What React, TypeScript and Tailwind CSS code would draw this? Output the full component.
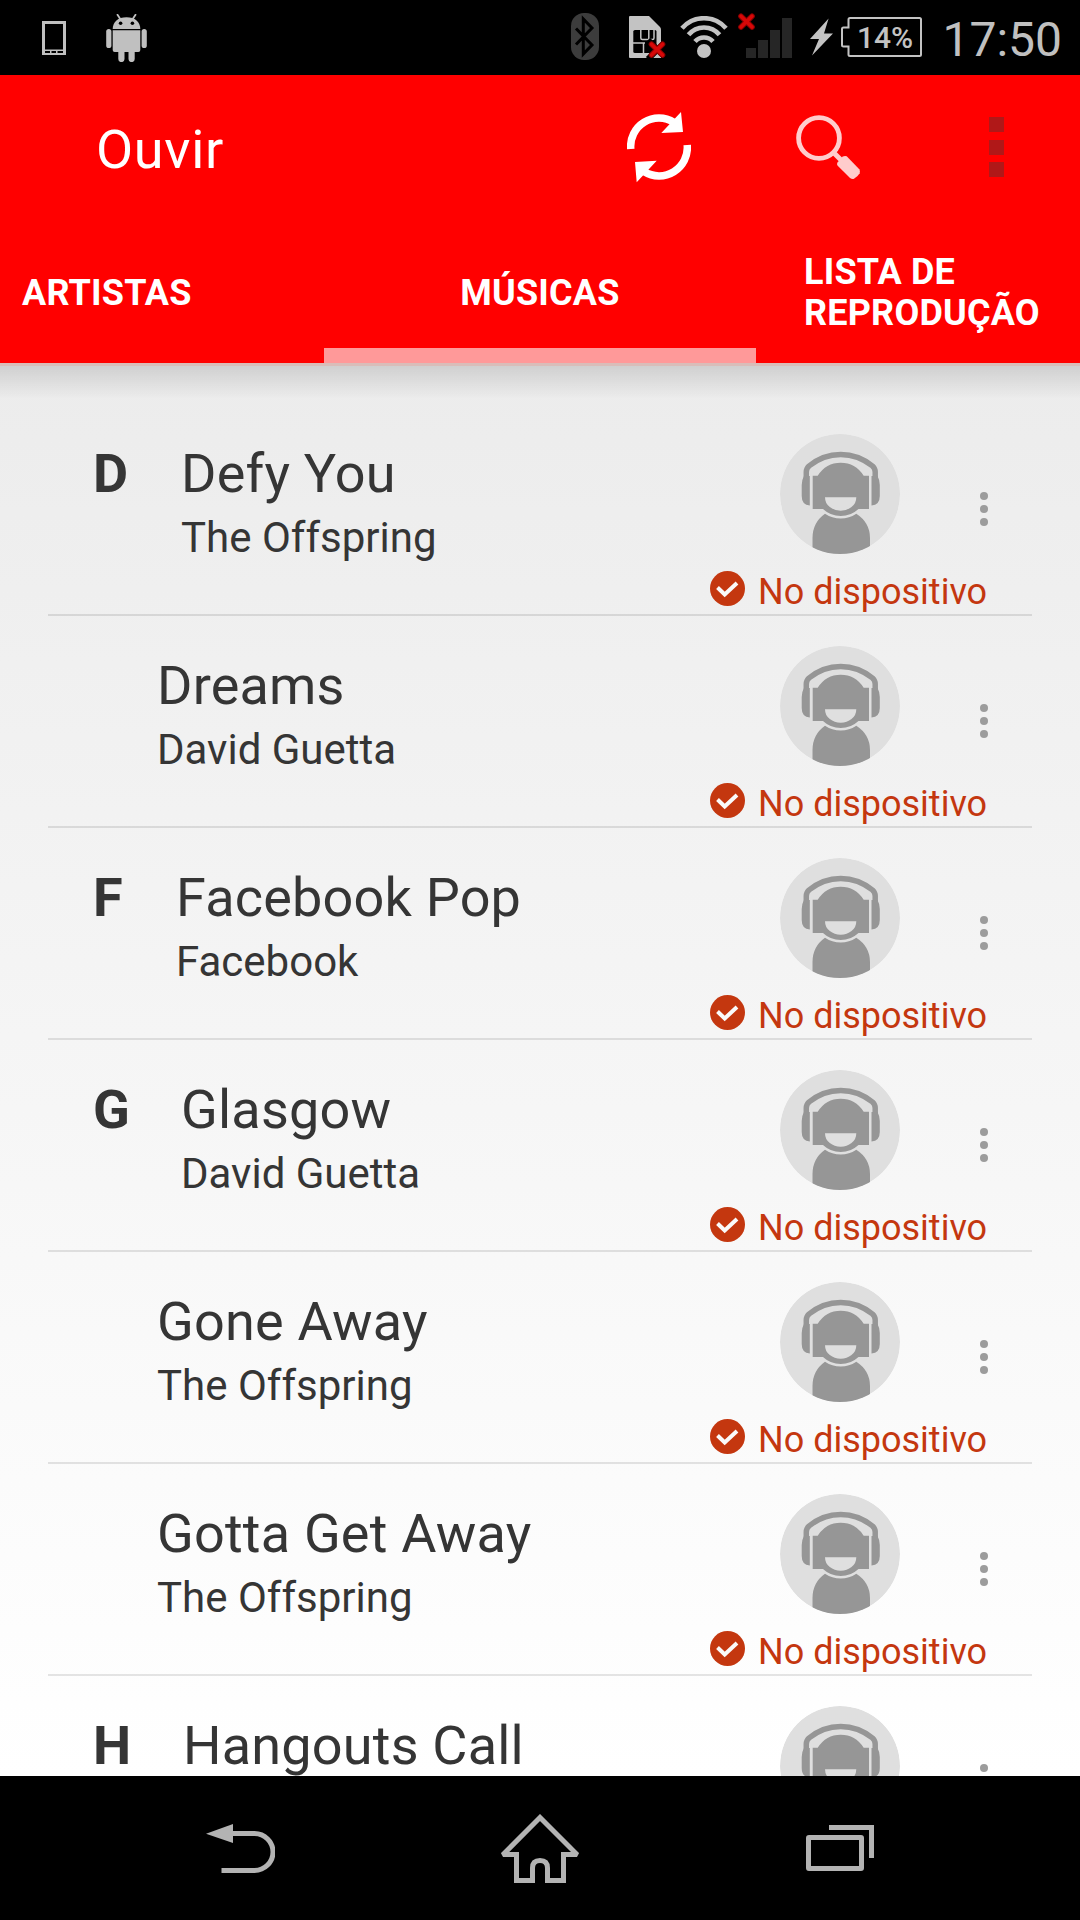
type Song = { letter?: string; title: string; artist?: string };

const SONGS: Song[] = [
  { letter: "D", title: "Defy You", artist: "The Offspring" },
  { title: "Dreams", artist: "David Guetta" },
  { letter: "F", title: "Facebook Pop", artist: "Facebook" },
  { letter: "G", title: "Glasgow", artist: "David Guetta" },
  { title: "Gone Away", artist: "The Offspring" },
  { title: "Gotta Get Away", artist: "The Offspring" },
  { letter: "H", title: "Hangouts Call" },
];

// Width of the index column, which follows the width of its letter.
const INDEX_WIDTH: Record<string, string> = {
  "": "w-[64px]",
  D: "w-[88px]",
  F: "w-[83px]",
  G: "w-[88px]",
  H: "w-[90px]",
};

function RedCross() {
  return (
    <>
      <path d="M3 3.2 14 14M14 3.2 3 14" stroke="#8f0000" strokeWidth="5.6" strokeLinecap="round" />
      <path d="M3 3.2 14 14M14 3.2 3 14" stroke="#d80808" strokeWidth="3.6" strokeLinecap="round" />
    </>
  );
}

function StatusBar() {
  return (
    <div className="flex h-[75px] items-start justify-between bg-black">
      <div className="flex items-start">
        <svg className="mt-[21px] ml-[42px]" width="24" height="34" viewBox="0 0 24 34">
          <path d="M0 0H24V34H0Z" fill="#c0c0c0" />
          <path d="M3 3H21V28.5H3ZM3 30H8V32H3ZM9.5 30H14V32H9.5ZM15.5 30H21V32H15.5Z" fill="#000" />
        </svg>
        <svg className="mt-[14px] ml-[39.5px]" width="41" height="48" viewBox="0 0 41 48" fill="#c0c0c0">
          <path d="M11.5 0.8 14.6 5.6M29.5 0.8 26.4 5.6" stroke="#c0c0c0" strokeWidth="1.8" strokeLinecap="round" />
          <path d="M6.7 15C6.7 8 12 3.3 20.5 3.3S34.3 8 34.3 15Z" />
          <circle cx="14.6" cy="9.3" r="1.8" fill="#000" />
          <circle cx="26.4" cy="9.3" r="1.8" fill="#000" />
          <path d="M6.7 16.3H34.3V36Q34.3 38 32.3 38H8.7Q6.7 38 6.7 36Z" />
          <rect x="0.2" y="15" width="5.2" height="19" rx="2.6" />
          <rect x="35.6" y="15" width="5.2" height="19" rx="2.6" />
          <path d="M12.3 37H18.5V45A3.1 3.1 0 0 1 12.3 45ZM22.5 37H28.7V45A3.1 3.1 0 0 1 22.5 45Z" />
        </svg>
      </div>
      <div className="flex items-start pr-[18px]">
        <svg className="mt-[13px]" width="28" height="47" viewBox="0 0 28 47" fill="none">
          <rect width="28" height="47" rx="13" fill="#3c3c3c" />
          <path d="M5 15.5 21 32 12.3 41V6L21 15 5 31.5" stroke="#000" strokeWidth="3" />
        </svg>
        <svg className="mt-[16px] ml-[30px]" width="37" height="43" viewBox="0 0 37 43" fill="none">
          <path d="M1 0H20L31 11Q32 12 32 14V42H1Q0 42 0 41V1Q0 0 1 0Z" fill="#c3c3c3" />
          <path d="M6 14H26Q27.500 14 27.500 15.500V37H6Q4.300 37 4.300 35.500V15.500Q4.300 14 6 14Z" fill="#000" />
          <path d="M4 27H16M14.500 37V27M11.800 14V22Q11.800 23.500 13.300 23.500H19.800V14M20 23.500H23.500Q25 23.500 25 22V14" stroke="#c3c3c3" strokeWidth="1.500" />
          <path d="M19 24 38 43M38 24 19 43" stroke="#000" strokeWidth="6" />
          <g transform="translate(19.500 25)">
            <RedCross />
          </g>
        </svg>
        <svg className="mt-[16px] ml-[14px]" width="48" height="43" viewBox="0 0 48 43" fill="none">
          <path d="M2 12.300A29 29 0 0 1 46 12.300M8.500 18.800A20 20 0 0 1 39.500 18.800M15 25.500A12 12 0 0 1 33 25.500" stroke="#c3c3c3" strokeWidth="4.600" />
          <circle cx="24" cy="35" r="7" fill="#c3c3c3" />
        </svg>
        <svg className="mt-[13px] ml-[10px]" width="54" height="45" viewBox="0 0 54 45" fill="none">
          <RedCross />
          <path d="M8 35H18V45H8ZM20 27H30V45H20ZM32 17H42V45H32ZM44 5H54V45H44Z" fill="#262626" />
        </svg>
        <svg className="mt-[18px] ml-[18px]" width="23" height="38" viewBox="0 0 23 38">
          <path d="M18.600 0.500 0 21H9L2 37.500 23 15.500H14Z" fill="#c3c3c3" />
        </svg>
        <div className="relative mt-[17px] ml-[8px] flex h-[40px] w-[81px]">
          <svg className="absolute inset-0" width="81" height="40" viewBox="0 0 81 40" fill="none">
            <path d="M9 1H78.500Q80 1 80 2.500V37.500Q80 39 78.500 39H9Q7.500 39 7.500 37.500V29.500H2.500Q1 29.500 1 28V12Q1 10.500 2.500 10.500H7.500V2.500Q7.500 1 9 1Z" stroke="#c3c3c3" strokeWidth="2" />
          </svg>
          <span className="ml-[15.500px] text-[30px] leading-[42px] font-medium text-[#c3c3c3]">14%</span>
        </div>
        <span className="ml-[20px] text-[48px] leading-[79px] text-[#c0c0c0]">17:50</span>
      </div>
    </div>
  );
}

function AppBar() {
  return (
    <div className="flex h-[143px] items-start justify-between">
      <h1 className="mt-[43px] ml-[96px] text-[54px] leading-[64px] tracking-[0.700px] text-white">Ouvir</h1>
      <div className="flex items-start pr-[76.500px]">
        <svg className="mt-[37px]" width="64" height="71" viewBox="0 0 64 71" fill="none">
          <path d="M3.800 37A28.200 28.200 0 0 1 47 10.500M60.200 33A28.200 28.200 0 0 1 17 59.500" stroke="#fff" strokeWidth="7.500" />
          <path d="M54 0 56 20 34.300 21ZM9.700 70.300 8 50 29.700 48.700Z" fill="#fff" />
        </svg>
        <svg className="mt-[39px] ml-[104px]" width="66" height="66" viewBox="0 0 66 66" fill="none">
          <circle cx="24" cy="24" r="20.400" stroke="#ffcccc" strokeWidth="4.800" />
          <path d="M38.500 38.500 46 46" stroke="#ffcccc" strokeWidth="5" />
          <path d="M42.300 48.700 47.700 42.500Q50 41.500 51.700 42.300L64.300 55.300Q65.500 57.300 64.700 59.300 62.500 63 59 64.700 57 65.300 55 64L42.700 51.700Q41.500 50 42.300 48.700Z" fill="#ffcccc" />
        </svg>
        <div className="mt-[42px] ml-[127.500px] flex flex-col gap-[7.500px]">
          <i className="size-[15px] bg-[#b01818]" />
          <i className="size-[15px] bg-[#b01818]" />
          <i className="size-[15px] bg-[#b01818]" />
        </div>
      </div>
    </div>
  );
}

function Tabs() {
  return (
    <div className="flex h-[145px] text-[36px] leading-[41px] font-bold tracking-[0.200px] text-white">
      <div className="flex w-[324px] items-center pt-[5px] pl-[22px]">ARTISTAS</div>
      <div className="relative flex w-[432px] items-center justify-center pt-[5px]">
        MÚSICAS
        <div className="absolute inset-x-0 bottom-0 h-[15px] bg-[#ff9999]" />
      </div>
      <div className="flex w-[324px] items-center pt-[5px] pl-[48px]">
        LISTA DE
        <br />
        REPRODUÇÃO
      </div>
    </div>
  );
}

function Avatar() {
  return (
    <svg className="size-[120px] rounded-full" viewBox="0 0 120 120" fill="none">
      <circle cx="60" cy="60" r="60" fill="#dfdfdf" />
      <path d="M26.300 48V38Q26.300 34.500 29 32 43 20.400 60.700 20.400T92.500 32Q95.200 34.500 95.200 38V48" stroke="#969696" strokeWidth="5.500" />
      <path d="M24 42Q21.700 46 21.700 51V62Q21.700 71 29.800 71.500V42ZM97.500 42Q99.800 46 99.800 51V62Q99.800 71 91.500 71.500V42Z" fill="#969696" />
      <path d="M32.700 41.700H37.700Q46 28.700 60.700 28.700T83.700 41.700H89V75H78.500Q71 82 60.700 82T43 75H32.700Z" fill="#969696" />
      <path d="M45 63.300H76.300Q76.300 69.500 71.500 73 67 76.700 60.700 76.700T49.800 73Q45 69.500 45 63.300Z" fill="#dfdfdf" />
      <path d="M45 79.700Q52 84.500 60.700 84.500T76.300 79.700Q90 88.500 90 104V120H32.500V104Q32.500 88.500 45 79.700Z" fill="#969696" />
    </svg>
  );
}

function DeviceBadge() {
  return (
    <div className="mt-[16.500px] flex items-start">
      <svg width="35" height="35" viewBox="0 0 35 35" fill="none">
        <circle cx="17.500" cy="17.500" r="17.500" fill="#c4370f" />
        <path d="M7.500 16.500 14.700 23.500 27 12" stroke="#fafafa" strokeWidth="4" />
      </svg>
      <span className="mt-[0.500px] ml-[13px] text-[36px] leading-[42px] text-[#c4370f]">No dispositivo</span>
    </div>
  );
}

function SongRow({ song }: { song: Song }) {
  const key = song.letter ?? "";
  return (
    <li className="mx-[48px] flex h-[212px] shrink-0 items-start border-b-2 border-black/10">
      <div className={`mt-[38px] ml-[45px] text-[54px] leading-[64px] font-bold ${INDEX_WIDTH[key]}`}>{key}</div>
      <div className="mt-[38px] flex-1 whitespace-nowrap">
        <div className="text-[54px] leading-[64px] tracking-[0.200px]">{song.title}</div>
        {song.artist && <div className="mt-[7px] text-[42px] leading-[50px]">{song.artist}</div>}
      </div>
      <div className="w-[322px]">
        <div className="flex items-start pt-[30px] pl-[70px]">
          <Avatar />
          <div className="mt-[58px] ml-[79.500px] flex flex-col gap-[4.600px]">
            <i className="size-[8.400px] rounded-full bg-[#9c9c9c]" />
            <i className="size-[8.400px] rounded-full bg-[#9c9c9c]" />
            <i className="size-[8.400px] rounded-full bg-[#9c9c9c]" />
          </div>
        </div>
        {song.artist && <DeviceBadge />}
      </div>
    </li>
  );
}

function NavBar() {
  return (
    <div className="flex h-[144px] justify-center bg-black">
      <div className="flex w-[300px] justify-center">
        <svg className="mt-[48px]" width="69" height="50" viewBox="0 0 69 50" fill="none">
          <path d="M0 9.800 27 0V19Z" fill="#b3b3b3" />
          <path d="M26 9.500H48.500A18.500 18.500 0 0 1 48.500 46.500H15.500" stroke="#b3b3b3" strokeWidth="5" />
        </svg>
      </div>
      <div className="flex w-[300px] justify-center">
        <svg className="mt-[38px]" width="78" height="70" viewBox="0 0 78 70" fill="none">
          <path d="M39 3.500 3 39.600 3.500 40.500H15.500V66.500H31.500V54Q31.500 46.500 39 46.500T46.500 54V66.500H62.500V40.500H74.500L75 39.600Z" stroke="#b3b3b3" strokeWidth="5" strokeLinejoin="miter" strokeMiterlimit="2" />
        </svg>
      </div>
      <div className="flex w-[300px] justify-center">
        <svg className="mt-[49px]" width="68" height="48" viewBox="0 0 68 48" fill="none">
          <rect x="2.500" y="12.500" width="53" height="31" rx="0.500" stroke="#b3b3b3" strokeWidth="5" />
          <path d="M23 2.500H65.500V33" stroke="#b3b3b3" strokeWidth="5" />
        </svg>
      </div>
    </div>
  );
}

export default function App() {
  return (
    <div className="flex h-[1920px] w-[1080px] flex-col overflow-hidden font-['Roboto',sans-serif] text-[#353535]">
      <StatusBar />
      <header className="bg-[#ff0000]">
        <AppBar />
        <Tabs />
      </header>
      <main className="relative flex-1 overflow-hidden bg-linear-to-b from-[#ececec] to-[#ffffff]">
        <div className="absolute inset-x-0 top-0 h-[36px] border-t-[3px] border-[#d9bdb9] bg-linear-to-b from-black/12 to-transparent" />
        <ul className="flex h-full flex-col pt-[41px]">
          {SONGS.map((song) => (
            <SongRow key={song.title} song={song} />
          ))}
        </ul>
      </main>
      <NavBar />
    </div>
  );
}
